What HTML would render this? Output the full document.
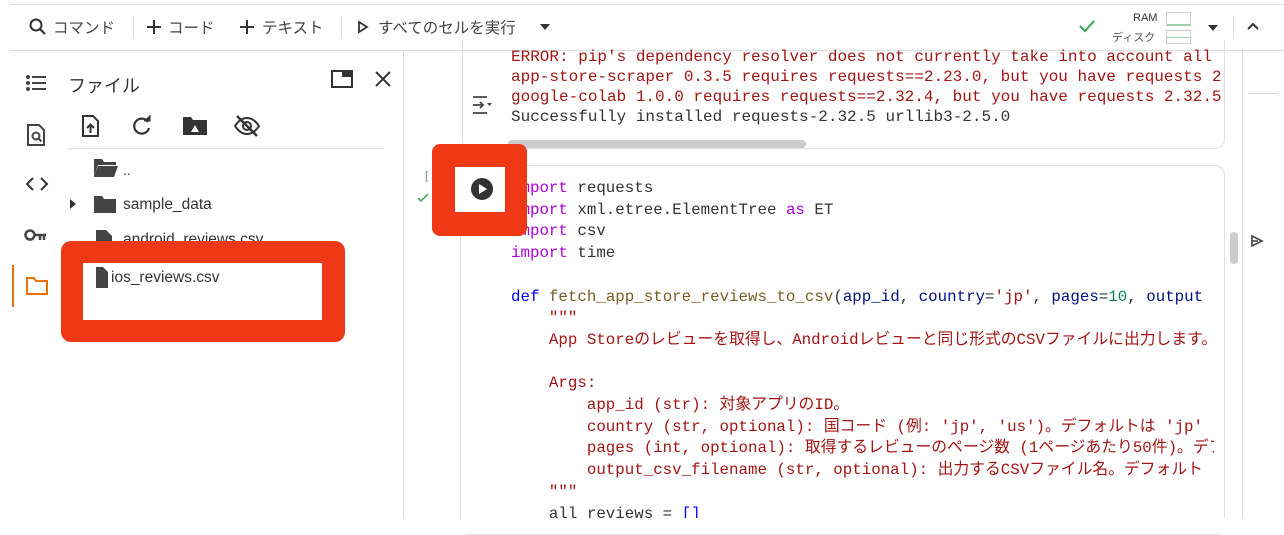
<!DOCTYPE html>
<html><head><meta charset="utf-8"><style>
*{margin:0;padding:0;box-sizing:border-box}
body{width:1284px;height:533px;background:#fff;position:relative;overflow:hidden;font-family:"Liberation Sans","Noto Sans CJK JP",sans-serif;color:#444}
.a{position:absolute}
.mono{font-family:"Liberation Mono","Noto Sans CJK JP",monospace;font-size:15.8px;white-space:pre;line-height:21.7px}
.tb{font-size:15.5px;color:#444;top:16px}
.k{color:#af00db}.b{color:#0000ff}.f{color:#795e26}.p{color:#001080}.s{color:#a31515}.n{color:#098658}
.out{font-family:"Liberation Mono",monospace;font-size:16px;white-space:pre;line-height:20px;color:#a31515}
</style></head><body>
<div class="a" style="left:10px;top:4px;width:1274px;height:1px;background:#ddd"></div>
<div class="a" style="left:10px;top:50px;width:1274px;height:1px;background:#ddd;box-shadow:0 1px 2px rgba(0,0,0,.08)"></div>
<!-- toolbar -->
<svg class="a" style="left:28px;top:17px" width="20" height="20" viewBox="0 0 20 20"><circle cx="8" cy="8" r="5.5" fill="none" stroke="#333" stroke-width="2"/><path d="M12 12l5 5" stroke="#333" stroke-width="2.2"/></svg>
<div class="a tb" style="left:53px">コマンド</div>
<div class="a" style="left:133px;top:16px;width:1px;height:22px;background:#ddd"></div>
<svg class="a" style="left:146px;top:19px" width="16" height="16"><path d="M8 1v14M1 8h14" stroke="#333" stroke-width="2"/></svg>
<div class="a tb" style="left:168px">コード</div>
<svg class="a" style="left:239px;top:19px" width="16" height="16"><path d="M8 1v14M1 8h14" stroke="#333" stroke-width="2"/></svg>
<div class="a tb" style="left:262px">テキスト</div>
<div class="a" style="left:341px;top:16px;width:1px;height:22px;background:#ddd"></div>
<svg class="a" style="left:357px;top:20px" width="12" height="14" viewBox="0 0 12 14"><path d="M2 2l8 5-8 5z" fill="none" stroke="#333" stroke-width="1.8"/></svg>
<div class="a tb" style="left:378px">すべてのセルを実行</div>
<svg class="a" style="left:540px;top:24px" width="10" height="6"><path d="M0 0h10L5 6z" fill="#333"/></svg>
<svg class="a" style="left:1078px;top:19px" width="18" height="14"><path d="M2 7l5 5 9-10" fill="none" stroke="#34a853" stroke-width="2"/></svg>
<div class="a" style="left:1133px;top:12px;font-size:11px;color:#333">RAM</div>
<div class="a" style="left:1112px;top:29px;font-size:11px;color:#555">ディスク</div>
<div class="a" style="left:1166px;top:12px;width:25px;height:14px;border:1px solid #ccc;border-bottom:2px solid #9fd4a8"></div>
<div class="a" style="left:1166px;top:30px;width:25px;height:14px;border:1px solid #ccc;background:linear-gradient(#fff 50%,#9fd4a8 50%,#9fd4a8 58%,#fff 58%)"></div>
<svg class="a" style="left:1208px;top:25px" width="10" height="6"><path d="M0 0h10L5 6z" fill="#333"/></svg>
<div class="a" style="left:1233px;top:16px;width:1px;height:22px;background:#ddd"></div>
<svg class="a" style="left:1247px;top:22px" width="12" height="8"><path d="M1 7l5-5 5 5" fill="none" stroke="#333" stroke-width="2"/></svg>
<!-- left icon strip -->
<svg class="a" style="left:25px;top:74px" width="22" height="18"><g fill="#444"><circle cx="3" cy="3" r="2"/><circle cx="3" cy="9" r="2"/><circle cx="3" cy="15" r="2"/><rect x="7" y="2" width="14" height="2"/><rect x="7" y="8" width="14" height="2"/><rect x="7" y="14" width="14" height="2"/></g></svg>
<svg class="a" style="left:26px;top:123px" width="20" height="24"><path d="M2 2h11l5 5v15H2z" fill="none" stroke="#444" stroke-width="2"/><circle cx="10" cy="13" r="3.5" fill="none" stroke="#444" stroke-width="2"/><path d="M12.5 15.5l3 3" stroke="#444" stroke-width="2"/></svg>
<svg class="a" style="left:25px;top:176px" width="24" height="16"><path d="M8 2L2 8l6 6M16 2l6 6-6 6" fill="none" stroke="#333" stroke-width="2"/></svg>
<svg class="a" style="left:24px;top:228px" width="24" height="14"><circle cx="6" cy="7" r="4.5" fill="none" stroke="#444" stroke-width="2.5"/><path d="M10 7h12M16 7v5M20 7v5" stroke="#444" stroke-width="2.5"/></svg>
<div class="a" style="left:12px;top:265px;width:2px;height:42px;background:#e8710a"></div>
<svg class="a" style="left:25px;top:276px" width="24" height="20"><path d="M2 2h7l2 3h11v13H2z" fill="none" stroke="#e8710a" stroke-width="2"/></svg>
<!-- file panel -->
<div class="a" style="left:68px;top:72px;font-size:18px;color:#333">ファイル</div>
<svg class="a" style="left:331px;top:70px" width="22" height="18"><rect x="1" y="1" width="20" height="16" fill="none" stroke="#333" stroke-width="2"/><rect x="11" y="1" width="10" height="6" fill="#333"/></svg>
<svg class="a" style="left:374px;top:70px" width="18" height="18"><path d="M2 2l14 14M16 2L2 16" stroke="#333" stroke-width="2"/></svg>
<svg class="a" style="left:81px;top:114px" width="20" height="24"><path d="M2 2h10l5 5v15H2z" fill="none" stroke="#333" stroke-width="2"/><path d="M9.5 19v-8M6 14l3.5-3.5L13 14" fill="none" stroke="#333" stroke-width="2"/></svg>
<svg class="a" style="left:131px;top:115px" width="22" height="22"><path d="M17 7A7.5 7.5 0 1 0 18 13" fill="none" stroke="#333" stroke-width="2.2"/><path d="M13 6h6V0" fill="#333" stroke="#333" stroke-width="1"/></svg>
<svg class="a" style="left:182px;top:116px" width="26" height="20"><path d="M1 1h8l2 3h14v15H1z" fill="#333"/><path d="M9 16l4-7 4 7z" fill="#fff"/></svg>
<svg class="a" style="left:233px;top:114px" width="28" height="24"><path d="M2 12c4-6 8-8 12-8s8 2 12 8c-4 6-8 8-12 8s-8-2-12-8z" fill="none" stroke="#333" stroke-width="2"/><circle cx="14" cy="12" r="4" fill="none" stroke="#333" stroke-width="2"/><path d="M4 2l20 20" stroke="#333" stroke-width="2.4"/></svg>
<div class="a" style="left:68px;top:148px;width:316px;height:1px;background:#ddd"></div>
<svg class="a" style="left:93px;top:158px" width="26" height="20"><path d="M1 1h8l2 3h12v3H5L1 19z" fill="#444"/><path d="M5 8h20l-4 11H1z" fill="#444"/></svg>
<div class="a" style="left:123px;top:162px;font-size:14px;color:#333">..</div>
<svg class="a" style="left:69px;top:199px" width="8" height="10"><path d="M1 0l6 5-6 5z" fill="#333"/></svg>
<svg class="a" style="left:93px;top:195px" width="24" height="19"><path d="M1 1h8l2 3h12v14H1z" fill="#444"/></svg>
<div class="a" style="left:123px;top:196px;font-size:15.5px;color:#333">sample_data</div>
<svg class="a" style="left:95px;top:229px" width="18" height="22"><path d="M1 1h10l6 6v14H1z" fill="#444"/></svg>
<div class="a" style="left:123px;top:231px;font-size:15.5px;color:#333">android_reviews.csv</div>
<!-- red box 2 -->
<div class="a" style="left:61px;top:241px;width:284px;height:101px;background:#ef3816;border-radius:10px"></div>
<div class="a" style="left:83px;top:263px;width:239px;height:57px;background:#fff"></div>
<svg class="a" style="left:95px;top:266px" width="14" height="23"><path d="M1 1h7l5 5v16H1z" fill="#444"/></svg>
<div class="a" style="left:111px;top:269px;font-size:15.5px;color:#333">ios_reviews.csv</div>
<!-- divider -->
<div class="a" style="left:403px;top:51px;width:1px;height:470px;background:#ddd"></div>
<div class="a" style="left:1242px;top:51px;width:1px;height:470px;background:#ddd"></div>
<div class="a" style="left:1248px;top:93px;width:30px;height:1px;background:#ddd"></div>
<!-- output cell -->
<div class="a" style="left:462px;top:40px;width:763px;height:109px;border:1px solid #e0e0e0;border-top:none;border-radius:0 0 10px 10px"></div>
<svg class="a" style="left:471px;top:95px" width="22" height="20"><path d="M2 2h14M2 18h14M2 10h10M9 7l3 3-3 3" fill="none" stroke="#444" stroke-width="1.8"/><path d="M16 8h5l-2.5 3z" fill="#444"/></svg>
<div class="a out" style="left:511px;top:47px;width:710px;overflow:hidden">ERROR: pip's dependency resolver does not currently take into account all
app-store-scraper 0.3.5 requires requests==2.23.0, but you have requests 2
google-colab 1.0.0 requires requests==2.32.4, but you have requests 2.32.5
<span style="color:#333">Successfully installed requests-2.32.5 urllib3-2.5.0</span></div>
<div class="a" style="left:508px;top:140px;width:298px;height:8px;background:#ccc;border-radius:4px"></div>
<!-- code cell -->
<div class="a" style="left:425px;top:170px;font-size:11px;color:#777">[</div>
<svg class="a" style="left:417px;top:193px" width="12" height="10"><path d="M1 5l3 3 7-7" fill="none" stroke="#34a853" stroke-width="1.5"/></svg>
<div class="a" style="left:460px;top:165px;width:765px;height:370px;border:1px solid #e0e0e0;border-radius:10px"></div>
<div class="a mono" style="left:511px;top:178px;width:703px;overflow:hidden;height:340px;color:#333"><span class="k">import</span> requests
<span class="k">import</span> xml.etree.ElementTree <span class="k">as</span> ET
<span class="k">import</span> csv
<span class="k">import</span> time

<span class="b">def</span> <span class="f">fetch_app_store_reviews_to_csv</span>(<span class="p">app_id</span>, <span class="p">country</span>=<span class="s">'jp'</span>, <span class="p">pages</span>=<span class="n">10</span>, <span class="p">output</span>
<span class="s">    """
    App Storeのレビューを取得し、Androidレビューと同じ形式のCSVファイルに出力します。

    Args:
        app_id (str): 対象アプリのID。
        country (str, optional): 国コード (例: 'jp', 'us')。デフォルトは 'jp'
        pages (int, optional): 取得するレビューのページ数 (1ページあたり50件)。デフォルト
        output_csv_filename (str, optional): 出力するCSVファイル名。デフォルト
    """</span>
    all_reviews = <span class="b">[]</span></div>
<div class="a" style="left:0;top:518px;width:1284px;height:15px;background:#fff"></div>
<div class="a" style="left:1230px;top:232px;width:8px;height:32px;background:#ccc;border-radius:4px"></div>
<svg class="a" style="left:1250px;top:234px" width="14" height="14"><path d="M2 2l10 5-10 5zM2 7h6" fill="none" stroke="#444" stroke-width="1.6"/></svg>
<!-- red box 1 -->
<div class="a" style="left:432px;top:144px;width:95px;height:92px;background:#ef3816;border-radius:8px"></div>
<div class="a" style="left:455px;top:167px;width:50px;height:45px;background:#fff"></div>
<svg class="a" style="left:470px;top:177px" width="24" height="24"><circle cx="12" cy="12" r="11" fill="#333"/><path d="M9 7l8 5-8 5z" fill="#fff"/></svg>
</body></html>
